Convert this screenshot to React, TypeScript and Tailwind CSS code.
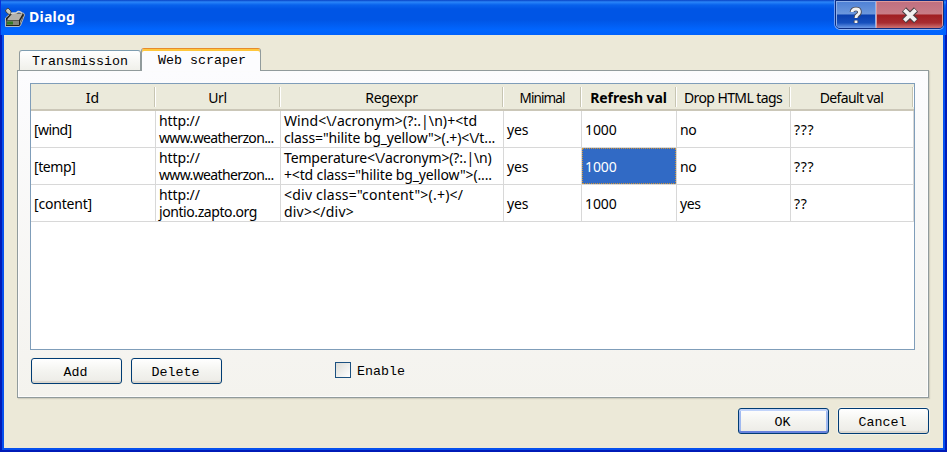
import type { ReactNode } from "react";

const ui = "font-['Noto_Sans','DejaVu_Sans',sans-serif]";
const mono = "font-['Liberation_Mono','DejaVu_Sans_Mono',monospace] text-[13.33px]";

type Line = { text: string; tracking: string };
type Row = { id: Line; url: Line[]; regexpr: Line[]; minimal: string; refresh: string; drop: string; fallback: string; selected?: boolean };

const headers = [
  { label: "Id", style: "tracking-normal" },
  { label: "Url", style: "tracking-[-0.3px]" },
  { label: "Regexpr", style: "tracking-[-0.3px]" },
  { label: "Minimal", style: "text-[13.5px] tracking-[-0.9px]" },
  { label: "Refresh val", style: "font-bold tracking-[-0.1px]" },
  { label: "Drop HTML tags", style: "tracking-[-0.6px]" },
  { label: "Default val", style: "tracking-[-0.6px]" },
];

const rows: Row[] = [
  {
    id: { text: "[wind]", tracking: "tracking-[-0.6px]" },
    url: [
      { text: "http://", tracking: "tracking-[-0.1px]" },
      { text: "www.weatherzon...", tracking: "tracking-[-0.63px]" },
    ],
    regexpr: [
      { text: "Wind<\\/acronym>(?:.|\\n)+<td", tracking: "tracking-[0.08px]" },
      { text: 'class="hilite bg_yellow">(.+)<\\/t...', tracking: "tracking-[-0.12px]" },
    ],
    minimal: "yes", refresh: "1000", drop: "no", fallback: "???",
  },
  {
    id: { text: "[temp]", tracking: "tracking-[-0.4px]" },
    url: [
      { text: "http://", tracking: "tracking-[-0.1px]" },
      { text: "www.weatherzon...", tracking: "tracking-[-0.63px]" },
    ],
    regexpr: [
      { text: "Temperature<\\/acronym>(?:.|\\n)", tracking: "tracking-[-0.15px]" },
      { text: '+<td class="hilite bg_yellow">(....', tracking: "tracking-[-0.15px]" },
    ],
    minimal: "yes", refresh: "1000", drop: "no", fallback: "???", selected: true,
  },
  {
    id: { text: "[content]", tracking: "tracking-[-0.2px]" },
    url: [
      { text: "http://", tracking: "tracking-[-0.1px]" },
      { text: "jontio.zapto.org", tracking: "tracking-[-0.42px]" },
    ],
    regexpr: [
      { text: '<div class="content">(.+)</', tracking: "tracking-[0.22px]" },
      { text: "div></div>", tracking: "tracking-[0.2px]" },
    ],
    minimal: "yes", refresh: "1000", drop: "yes", fallback: "??",
  },
];

const columns = "grid grid-cols-[125px_125px_223px_78px_95px_114px_123px]";

function Cell({ lines, selected = false }: { lines: Line[]; selected?: boolean }) {
  return (
    <div className="border-r border-b border-[#d8d8d8]">
      <div
        className={
          selected
            ? "flex h-full flex-col justify-center border border-dotted border-[#ce953a] bg-[#316ac5] pl-[2px] text-white"
            : "flex h-full flex-col justify-center pl-[3px] text-black"
        }
      >
        {lines.map((line, i) => (
          <span key={i} className={`block h-[17px] leading-[17px] whitespace-pre ${line.tracking}`}>
            {line.text}
          </span>
        ))}
      </div>
    </div>
  );
}

function PushButton({ children, primary = false }: { children: ReactNode; primary?: boolean }) {
  return (
    <button
      className={`h-[26px] w-[91px] rounded-[3px] border border-[#003c74] bg-linear-to-b from-white via-[#f4f4f0] to-[#ecebe6] leading-[24px] text-black ${mono} ${
        primary
          ? "shadow-[inset_0_2px_0_#c2d4fa,inset_0_-2px_0_#6983dd,inset_2px_0_0_#a0b9f0,inset_-2px_0_0_#a0b9f0]"
          : "shadow-[inset_0_-2px_1px_#dad6ce,0_0_0_1px_#f3f1e8]"
      }`}
    >
      <span className="relative top-[2px] right-[1px]">{children}</span>
    </button>
  );
}

function ScannerIcon() {
  return (
    <svg className="mt-[7px] ml-[3px] h-5 w-[21px]" viewBox="0 0 21 20">
      <path d="M1.5 11 L7 6 H19.5 L20.5 8 L16.5 18.5 L15 19.5 H1.5 Z" fill="#24221c" stroke="#dddbd0" strokeWidth="0.8" />
      <path d="M3.5 12 L8 7 H18.5 L15 13 H3.5Z" fill="#b3b2ab" />
      <path d="M2.5 13.5 H15 V18 H2.5Z" fill="#85877c" />
      <path d="M3 14.5 H9 V17.5 H3Z" fill="#347a24" />
      <path d="M16 14 L19.5 8.5 L16 17.5Z" fill="#9a988f" />
      <path d="M1.5 3 L4 1 L7 4 L7 7 L5 7.5 L2 5Z" fill="#c9c8be" stroke="#343229" strokeWidth="0.8" />
      <path d="M7 6.5 L12 6 L14 4.5 Q17 4 18 6.5" fill="none" stroke="#d6d4ca" strokeWidth="1.4" />
    </svg>
  );
}

function TitleBar() {
  return (
    <header className="flex h-[35px] shrink-0 border-r border-l border-[#0831d9] bg-[linear-gradient(#0842c4_0px,#2a85f8_2px,#0862ec_5px,#0055e5_9px,#0055e5_20px,#0166ff_30px,#0162fc_35px)]">
      <ScannerIcon />
      <h1 className={`mt-[6px] ml-[4px] text-[14px] leading-[22px] font-bold tracking-[0.25px] text-white ${ui}`}>Dialog</h1>
      <div className="mr-[2px] ml-auto flex h-[29px] w-[109px] overflow-hidden rounded-b-[5px] border border-[#0b2c80] shadow-[0_1px_0_#8fb4f4,-1px_0_0_#6f9cf0]">
        <div className="flex w-10 items-center justify-center border-x border-t border-[#8fb0e8] bg-[linear-gradient(#4f82d6_0%,#6c97dc_46%,#0a3fae_50%,#1650bd_80%,#6d9ae6_100%)]">
          <svg className="h-[19px] w-[14px]" viewBox="0 0 14 19">
            <path d="M3 6 Q3 3 7 3 Q10.5 3 10.5 6 Q10.5 8 8.5 9 Q7 10 7 12 M7 14.5 V17" fill="none" stroke="#4a4a55" strokeWidth="4.6" />
            <path d="M3 6 Q3 3 7 3 Q10.5 3 10.5 6 Q10.5 8 8.5 9 Q7 10 7 12 M7 14.5 V17" fill="none" stroke="#f2f2f2" strokeWidth="2.8" />
          </svg>
        </div>
        <div className="flex flex-1 items-center justify-center border-x border-t border-[#e09a9a] bg-[linear-gradient(#c07080_0%,#c87c86_46%,#a01e22_50%,#a82c30_80%,#cf7474_100%)]">
          <svg className="h-[18px] w-[18px]" viewBox="0 0 18 18">
            <path d="M3 3.5 L15 15 M15 3.5 L3 15" stroke="#4c4044" strokeWidth="6" />
            <path d="M3.4 3.9 L14.6 14.6 M14.6 3.9 L3.4 14.6" stroke="#f2f0f0" strokeWidth="4" />
          </svg>
        </div>
      </div>
    </header>
  );
}

export default function App() {
  return (
    <div className="flex h-[452px] w-[947px] flex-col overflow-hidden bg-[#0054e3]">
      <TitleBar />
      <div className="flex grow border-r-2 border-b-2 border-l-2 border-[#001bb8]">
        <main className="flex grow flex-col border-r-2 border-b-2 border-l-2 border-[#0650ee] bg-[#ece9d8]">
          <div className="mt-[13px] ml-[15px] flex h-[22px] items-end">
            <div className={`h-5 w-[122px] rounded-t-[3px] border border-b-0 border-[#919b9c] border-t-[#7e9db0] bg-linear-to-b from-white to-[#f0f0ea] pl-3 leading-[21px] text-black ${mono}`}>
              Transmission
            </div>
            <div className={`z-10 -mb-px h-[23px] w-[120px] rounded-t-[3px] border-x border-t border-[#919b9c] border-t-[#e68b2c] bg-[#fcfcfe] pl-4 leading-[23px] text-black shadow-[inset_0_2px_0_#ffc73c] ${mono}`}>
              Web scraper
            </div>
          </div>
          <section className="ml-[13px] flex h-[328px] w-[912px] flex-col border border-[#919b9c] bg-linear-to-b from-[#fcfcfe] to-[#f4f3ee] px-3 pt-3 shadow-[inset_0_0_0_1px_#fcfcfc,1px_1px_1px_#d0cebf]">
            <div className={`h-[267px] w-[885px] border border-[#7f9db9] bg-white text-[14px] ${ui}`}>
              <div className={`${columns} h-[27px] border-b-2 border-[#cbc7b8] bg-[#ebeadb] text-black`}>
                {headers.map((header) => (
                  <div key={header.label} className="flex h-full items-center">
                    <span className={`grow text-center leading-[20px] whitespace-nowrap ${header.style}`}>
                      <span className="relative top-px">{header.label}</span>
                    </span>
                    <span className="h-5 w-[2px] border-r border-l border-r-white border-l-[#c7c5b2]" />
                  </div>
                ))}
              </div>
              {rows.map((row) => (
                <div key={row.id.text} className={`${columns} h-[37px]`}>
                  <Cell lines={[row.id]} />
                  <Cell lines={row.url} />
                  <Cell lines={row.regexpr} />
                  <Cell lines={[{ text: row.minimal, tracking: "tracking-[-0.2px]" }]} />
                  <Cell lines={[{ text: row.refresh, tracking: "tracking-[-0.1px]" }]} selected={row.selected} />
                  <Cell lines={[{ text: row.drop, tracking: "tracking-[-0.4px]" }]} />
                  <Cell lines={[{ text: row.fallback, tracking: "tracking-[0.7px]" }]} />
                </div>
              ))}
            </div>
            <div className="mt-2 ml-px flex gap-[9px]">
              <PushButton>Add</PushButton>
              <PushButton>Delete</PushButton>
              <label className={`mt-1 ml-[104px] flex h-4 gap-[6px] leading-[19px] text-black ${mono}`}>
                <span className="h-4 w-4 border border-[#1c5180] bg-linear-to-br from-[#dcdcd7] to-white" />
                Enable
              </label>
            </div>
          </section>
          <div className="mt-[10px] mr-[14px] flex justify-end gap-[9px]">
            <PushButton primary>OK</PushButton>
            <PushButton>Cancel</PushButton>
          </div>
        </main>
      </div>
    </div>
  );
}
